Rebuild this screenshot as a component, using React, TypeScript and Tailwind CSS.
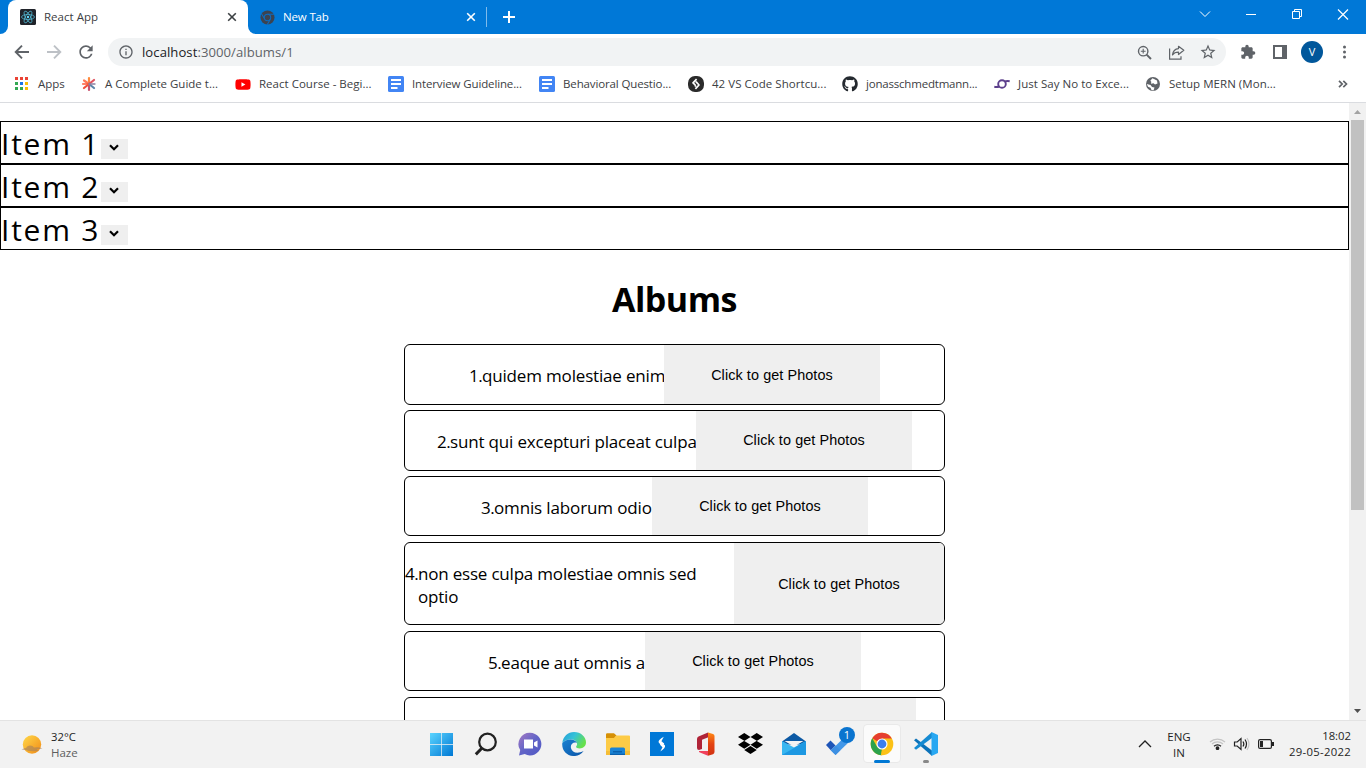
import React from "react";
import { FaGithub, FaYoutube, FaDropbox } from "react-icons/fa";
import { MdRefresh, MdInfoOutline, MdExtension, MdStarBorder } from "react-icons/md";

const albums = [
  { n: 1, title: "quidem molestiae enim", box: "h-[61px]", text: "w-[195px]", track: "tracking-[-0.17px]", btn: "w-[216px] pt-[2px]" },
  { n: 2, title: "sunt qui excepturi placeat culpa", box: "h-[61px] mt-[5px]", text: "w-[259px]", track: "tracking-[-0.17px]", btn: "w-[216px] pt-px" },
  { n: 3, title: "omnis laborum odio", box: "h-[60px] mt-[5px]", text: "w-[171px]", track: "tracking-[-0.14px]", btn: "w-[216px] pt-px" },
  { n: 4, title: "non esse culpa molestiae omnis sed optio", box: "h-[83px] mt-[6px]", text: "w-[329px] pr-[30px]", track: "tracking-[-0.2px]", btn: "w-[210px] pt-[2px] rounded-r-[5px]" },
  { n: 5, title: "eaque aut omnis a", box: "h-[60px] mt-[6px]", text: "w-[157px]", track: "tracking-[-0.16px]", btn: "w-[216px] pt-px" },
  { n: 6, title: "", box: "h-[61px] mt-[6px]", text: "w-[266px]", track: "", btn: "w-[216px]" },
];

function ReactIcon() {
  return (
    <svg className="h-4 w-4 shrink-0" viewBox="0 0 16 16">
      <rect width="16" height="16" rx="1.5" fill="#20232a" />
      <g fill="none" stroke="#53b9d4" strokeWidth=".75">
        <ellipse cx="8" cy="8" rx="6.5" ry="2.5" />
        <ellipse cx="8" cy="8" rx="6.5" ry="2.5" transform="rotate(60 8 8)" />
        <ellipse cx="8" cy="8" rx="6.5" ry="2.5" transform="rotate(120 8 8)" />
      </g>
      <circle cx="8" cy="8" r="1.2" fill="#61dafb" />
    </svg>
  );
}

function ChromeGrey() {
  return (
    <svg className="h-[15px] w-[15px] shrink-0" viewBox="0 0 16 16">
      <circle cx="8" cy="8" r="7.5" fill="#3c4350" />
      <circle cx="8" cy="8" r="3.4" fill="#3c4350" stroke="#0c6cc0" strokeWidth="1.1" />
      <path d="M8 4.6h7M5 9.7 1.6 4M11 9.8l-3.4 6" stroke="#0c6cc0" strokeWidth="1.1" />
    </svg>
  );
}

function Cross({ cls }: { cls: string }) {
  return (
    <svg className={cls} viewBox="0 0 10 10" fill="none" stroke="currentColor" strokeWidth="1.6">
      <path d="M1.2 1.2l7.6 7.6M8.8 1.2 1.2 8.8" />
    </svg>
  );
}

function TabStrip() {
  return (
    <div className="flex h-[34px] shrink-0 bg-[#0078d7] text-[11.5px] text-white">
      <div className="flex w-2 items-end bg-white"><div className="h-full w-full rounded-br-lg bg-[#0078d7]" /></div>
      <div className="w-[240px] bg-[#0078d7]">
        <div className="flex h-full items-center rounded-t-lg bg-white pl-3 pr-[11px] text-[#3c4043]">
          <ReactIcon />
          <span className="ml-2 grow tracking-[0.02px]">React App</span>
          <Cross cls="h-[10px] w-[10px]" />
        </div>
      </div>
      <div className="flex w-[238px] bg-white">
        <div className="flex w-full items-center rounded-bl-lg bg-[#0078d7] pl-[12px] pr-[10px]">
          <ChromeGrey />
          <span className="ml-[8px] grow tracking-[-0.15px]">New Tab</span>
          <Cross cls="h-[10px] w-[10px]" />
        </div>
      </div>
      <div className="my-[7px] w-px shrink-0 bg-[#7fbbeb]" />
      <div className="flex grow items-center bg-[#0078d7] pl-[16px]">
        <svg className="h-3 w-3" viewBox="0 0 12 12"><path d="M6 0v12M0 6h12" stroke="white" strokeWidth="2" /></svg>
      </div>
      <svg className="h-[34px] w-[184px] shrink-0" viewBox="1182 0 184 34" fill="none" stroke="white" strokeWidth="1">
        <path d="M1200 11.5l5 5 5-5" />
        <path d="M1246 14.5h10" />
        <path d="M1292.5 11.500h7v7h-7zM1294.500 11.500v-2h7v7h-2" />
        <path d="M1338 9.500l10 10M1348 9.500l-10 10" strokeWidth="1.2" />
      </svg>
    </div>
  );
}

function Toolbar() {
  return (
    <div className="flex h-[36px] shrink-0 items-center bg-white text-[#5f6368]">
      <svg className="ml-[14px] h-4 w-4" viewBox="0 0 16 16" fill="none" stroke="#5f6368" strokeWidth="1.9"><path d="M15 8H2M8 1.600 1.700 8 8 14.400" /></svg>
      <svg className="ml-4 h-4 w-4" viewBox="0 0 16 16" fill="none" stroke="#bdc1c6" strokeWidth="1.9"><path d="M1 8h13M8 1.600 14.300 8 8 14.400" /></svg>
      <MdRefresh className="ml-[14px] h-5 w-5" />
      <div className="ml-[12px] flex h-7 w-[1118px] items-center rounded-full bg-[#f1f3f4] pl-[10px] pr-[9px]">
        <MdInfoOutline className="h-4 w-4" />
        <span className="ml-2 grow pt-px text-[13.1px] tracking-[0.06px]"><span className="text-[#202124]">localhost</span>:3000/albums/1</span>
        <svg className="h-[15px] w-[15px]" viewBox="0 0 15 15" fill="none" stroke="#5f6368" strokeWidth="1.400"><circle cx="6.200" cy="6.200" r="4.700" /><path d="M9.600 9.600 14 14" strokeWidth="1.900" /><path d="M6.200 3.800v4.800M3.800 6.200h4.800" strokeWidth="1.100" /></svg>
        <svg className="ml-[16px] h-[17px] w-[17px]" viewBox="0 0 17 17" fill="none" stroke="#5f6368" strokeWidth="1.2">
          <path d="M1.600 4.500v10.700h11.400v-3" /><path d="M10.500 2.300 15.800 6.300l-5.300 4.200V8.200c-3 0-4.700.8-6 2.700.4-3.400 2.400-6 6-6.300z" strokeLinejoin="round" />
        </svg>
        <MdStarBorder className="ml-[14px] h-[18px] w-[18px]" />
      </div>
      <MdExtension className="ml-[14px] h-4 w-4" />
      <svg className="ml-[17px] h-[14px] w-[14px]" viewBox="0 0 14 14"><path d="M0 0h14v14H0zM2 2v10h7V2z" fillRule="evenodd" fill="#5f6368" /></svg>
      <div className="ml-[14px] flex h-[22px] w-[22px] items-center justify-center rounded-full bg-[#01579b] text-[11px] text-white">V</div>
      <svg className="ml-[17px] h-4 w-4" viewBox="0 0 16 16" fill="#5f6368"><circle cx="4.500" cy="3" r="1.500" /><circle cx="4.500" cy="8" r="1.500" /><circle cx="4.500" cy="13" r="1.500" /></svg>
    </div>
  );
}

function DocIcon() {
  return <svg className="h-4 w-4" viewBox="0 0 16 16"><rect width="16" height="16" rx="1.5" fill="#4285f4" /><path d="M3 4h10M3 8h10M3 12h6.500" stroke="white" strokeWidth="1.8" /></svg>;
}

const bookmarks: { label: string; w: string; track: string; icon: React.ReactNode }[] = [
  {
    label: "Apps", w: "w-[67px]", track: "tracking-[0px]",
    icon: <svg className="h-4 w-4" viewBox="0 0 16 16">
      <path d="M1 1h3v3H1zM6 1h3v3H6zM11 1h3v3h-3z" fill="#ea4335" />
      <path d="M1 6h3v3H1zM1 11h3v3H1zM6 11h3v3H6z" fill="#34a853" />
      <path d="M6 6h3v3H6z" fill="#1a73e8" /><path d="M11 6h3v3h-3zM11 11h3v3h-3z" fill="#fbbc04" />
    </svg>,
  },
  {
    label: "A Complete Guide t...", w: "w-[154px]", track: "tracking-[0px]",
    icon: <svg className="h-4 w-4" viewBox="0 0 16 16" strokeWidth="2.2" strokeLinecap="round">
      <path d="M8 8V2" stroke="#ff8a3c" /><path d="M8 8v6" stroke="#c9536d" /><path d="M8 8 3 4.500" stroke="#ff7a59" /><path d="M8 8 3 12" stroke="#f0503c" /><path d="M8 8l5-4" stroke="#e0525e" /><path d="M8 8l5 4" stroke="#5d84a8" /><path d="M8 8H1.600" stroke="#ff5a36" strokeWidth="1.300" /><path d="M8 8h6" stroke="#8d7fa0" strokeWidth="1.300" />
    </svg>,
  },
  { label: "React Course - Begi...", w: "w-[153px]", track: "tracking-[0.02px]", icon: <FaYoutube className="h-[17px] w-[17px] text-[#f00]" /> },
  { label: "Interview Guideline...", w: "w-[151px]", track: "tracking-[-0.13px]", icon: <DocIcon /> },
  { label: "Behavioral Questio...", w: "w-[149px]", track: "tracking-[-0.13px]", icon: <DocIcon /> },
  {
    label: "42 VS Code Shortcu...", w: "w-[154px]", track: "tracking-[0.04px]",
    icon: <svg className="h-4 w-4" viewBox="0 0 16 16"><rect width="16" height="16" rx="7" fill="#2b2b2b" /><path d="M8.600 3.200 5 6.800l2.400 2.300M8.600 6.200 11 9l-3.600 3.800M7.800 5.500 9 6.800M6.800 10.500 8 9.300" fill="none" stroke="white" strokeWidth="1.700" strokeLinejoin="round" /></svg>,
  },
  { label: "jonasschmedtmann...", w: "w-[152px]", track: "tracking-[-0.2px]", icon: <FaGithub className="h-4 w-4 text-[#24292f]" /> },
  {
    label: "Just Say No to Exce...", w: "w-[151px]", track: "tracking-[0.04px]",
    icon: <svg className="h-4 w-4" viewBox="0 0 16 16" fill="none" stroke="#5c3f8c" strokeWidth="1.900"><circle cx="8" cy="8" r="3.800" /><path d="M.3 10.800Q3 11.300 5.500 10.500M15.700 5.200Q13 4.700 10.500 5.500" strokeWidth="2.100" /></svg>,
  },
  {
    label: "Setup MERN (Mon...", w: "w-[180px]", track: "tracking-[0.04px]",
    icon: <svg className="h-4 w-4" viewBox="0 0 16 16"><circle cx="8" cy="8" r="7" fill="#5f6368" /><path d="M7.500 2.300 12 4.500l.5 3-2.500 1-1.500-1.300-2.500.5.300-2-1-1zM1.800 8l3.700 1 1.500 2 2.500.5-1 3-2-.5-1-2.300-2.500-1z" fill="white" /></svg>,
  },
];

function Bookmarks() {
  return (
    <div className="flex h-[33px] shrink-0 items-center border-b border-[#dadce0] bg-white pb-[4px] pl-[14px] text-[11.5px] text-[#3c4043]">
      {bookmarks.map((b) => (
        <div key={b.label} className={"flex shrink-0 items-center whitespace-nowrap " + b.w}>
          <span className="flex w-4 shrink-0 justify-center">{b.icon}</span>
          <span className={"ml-2 " + b.track}>{b.label}</span>
        </div>
      ))}
      <svg className="ml-auto mr-[18px] h-2 w-[10px]" viewBox="0 0 10 8" fill="none" stroke="#5f6368" strokeWidth="1.700"><path d="M1 .8 4.200 4 1 7.200M5.300 .8 8.500 4 5.300 7.200" /></svg>
    </div>
  );
}

function Page() {
  return (
    <div className="flex h-[617px] shrink-0 overflow-hidden bg-white text-black">
      <div className="flex w-[1349px] shrink-0 flex-col pt-[18px]">
        {[1, 2, 3].map((i) => (
          <div key={i} className="flex h-[43px] shrink-0 border border-black">
            <span className="w-[100px] whitespace-nowrap text-[30px] leading-[43px] tracking-[1.75px]">Item {i}</span>
            <button className="mt-[17px] flex h-5 w-[27px] items-center justify-center bg-[#efefef] pb-[3px] pr-px">
              <svg className="h-[7px] w-[10px]" viewBox="0 0 10 7" fill="none" stroke="black" strokeWidth="2.200"><path d="M1 1.200l4 4 4-4" /></svg>
            </button>
          </div>
        ))}
        <h1 className="mt-[25px] h-[49px] shrink-0 text-center text-[34px] font-bold leading-[49px] tracking-[-0.5px]">Albums</h1>
        <ul className="ml-[404px] mt-[20px] w-[541px]">
          {albums.map((a) => (
            <li key={a.n} className={"flex items-stretch justify-center rounded-[6px] border border-black " + a.box}>
              <div className={"flex shrink-0 pt-[19px] text-[17px] leading-[23px] " + a.text}>
                {a.title && <span className="w-[13px] shrink-0 tracking-[-0.6px]">{a.n}.</span>}
                {a.title && <span className={a.n === 4 ? a.track : "whitespace-nowrap " + a.track}>{a.title}</span>}
              </div>
              <button className={"shrink-0 bg-[#efefef] font-['Liberation_Sans',sans-serif] text-[14.4px] tracking-[0.09px] " + a.btn}>{a.title && "Click to get Photos"}</button>
            </li>
          ))}
        </ul>
      </div>
      <div className="flex w-[17px] flex-col items-center bg-[#f1f1f1]">
        <svg className="h-[17px] w-[17px] shrink-0" viewBox="0 0 17 17"><path d="M5 11l3.500-4 3.500 4z" fill="#a3a3a3" /></svg>
        <div className="h-[390px] w-[13px] bg-[#c1c1c1]" />
        <svg className="mt-auto h-[17px] w-[17px] shrink-0" viewBox="0 0 17 17"><path d="M5 6l3.500 4L12 6z" fill="#505050" /></svg>
      </div>
    </div>
  );
}

const taskIcons: React.ReactNode[] = [
  <svg key="win" className="h-6 w-6" viewBox="0 0 24 24"><defs><linearGradient id="win" x1="0" y1="0" x2="1" y2="1"><stop stopColor="#5ad4ff" /><stop offset="1" stopColor="#0078d4" /></linearGradient></defs><path d="M0 1h11.300v11H0zM12 1h11v11H12zM0 12.700h11.300V24H0zM12 12.700h11V24H12z" fill="url(#win)" /></svg>,
  <svg key="search" className="h-6 w-6" viewBox="0 0 24 24" fill="none" stroke="#222"><circle cx="13.500" cy="10" r="8.300" strokeWidth="2.200" /><path d="M7.800 16.300 1.800 22.400" strokeWidth="3" /></svg>,
  <svg key="chat" className="h-6 w-6" viewBox="0 0 24 24"><defs><linearGradient id="chat" x1="0" y1="0" x2="1" y2="1"><stop stopColor="#a57ac3" /><stop offset=".5" stopColor="#6264c7" /><stop offset="1" stopColor="#5058c4" /></linearGradient></defs><path d="M12 .8a11.300 11.300 0 1 1-5.200 21.300L1 23.500l1.200-5.400A11.300 11.300 0 0 1 12 .8z" fill="url(#chat)" /><path d="M6 7.500h9v9H6zM16 10.500l3.500-2v7l-3.500-2z" fill="white" /></svg>,
  <svg key="edge" className="h-6 w-6" viewBox="0 0 24 24"><defs><linearGradient id="edgeA" x1="0" y1="0" x2="1" y2=".5"><stop stopColor="#259bd8" /><stop offset=".5" stopColor="#35c2d8" /><stop offset="1" stopColor="#66e04c" /></linearGradient><linearGradient id="edgeB" x1="0" y1="0" x2="1" y2="1"><stop stopColor="#1a82d2" /><stop offset="1" stopColor="#0b55a8" /></linearGradient></defs>
    <path d="M.3 11C1 4.500 6 0 12 0c7 0 12 5 12 10.300 0 4-3 6.200-6.200 6.200-2.400 0-3.700-.8-3.700-1.700 0-.7 1-1.100 1-2.800 0-2.700-2.600-4.600-6-4.600C5 7.400 1.500 9 .3 11z" fill="url(#edgeA)" /><path d="M.3 11C1.500 9 5 7.400 8.500 7.400c3.700 0 6 1.800 6.500 3.600-3-1.500-7 .7-6 5.200 1 4 6 6.200 12.600 2.800A12 12 0 0 1 11 24C4.500 23.500-.5 18 .3 11z" fill="url(#edgeB)" /></svg>,
  <svg key="files" className="h-6 w-6" viewBox="0 0 24 24"><path d="M0 2.500Q0 1.300 1.200 1.300H8l2.500 2.200L8.500 6H0z" fill="#d69006" /><path d="M0 6h8l2.200-2.500H23q1 0 1 1V23H0z" fill="#fdcb46" /><path d="M0 19h24v4H0z" fill="#f5bd36" /><path d="M4 23v-6q0-1.500 1.500-1.500h12q1.500 0 1.500 1.500v6z" fill="#1a83d4" /><path d="M7 19h9v1.500H7zM4 21.800h15V23H4z" fill="#0a60ad" /></svg>,
  <svg key="bolt" className="h-6 w-6" viewBox="0 0 24 24"><path d="M0 0h24v24H0z" fill="#0078d7" /><path d="M13.800 4.800Q8 8 8.600 10.200 10.500 12.500 12 14.800 13.500 13.500 14.200 11.600L11.400 9.200zM10.300 19.600Q15.800 16 15 13.600 13 11.500 12 9.500 10.800 11 10 12.700L12.500 15.200z" fill="white" /></svg>,
  <svg key="office" className="h-6 w-6" viewBox="0 0 24 24"><defs><linearGradient id="off" x1="0" y1="0" x2="0" y2="1"><stop stopColor="#ff8a15" /><stop offset=".5" stopColor="#e34313" /><stop offset="1" stopColor="#d13212" /></linearGradient></defs><path d="M14 .5 4.500 4.500Q3 5.300 3 7v9q0 2 2 2l3-1V7.700L15 5z" fill="#b02438" /><path d="M14 .5l5 1.600Q20.500 2.700 20.500 4v16q0 1.600-1.500 2.200L14 23.700z" fill="url(#off)" /><path d="M5 19h9v4.700L6 20.500q-1.500-.5-1-1.500z" fill="#f0415c" /></svg>,
  <FaDropbox key="drop" className="h-[25px] w-[25px] text-black" />,
  <svg key="mail" className="h-6 w-6" viewBox="0 0 24 24"><path d="M0 9.500 12 1 24 9.500v3H0z" fill="#0c59a4" /><path d="M0 9 12 15.500 24 9v14H0z" fill="#38b6f0" /><path d="M2.500 9h19L12 14.500z" fill="#f3f3f3" /><path d="M0 23 24 9v14z" fill="#1d98e2" /></svg>,
  <svg key="todo" className="h-6 w-6" viewBox="0 0 24 24"><path d="M5 18.500 18.500 5l5 4.500L9.500 23z" fill="#4297e8" /><path d="M0 13l4.500-4.600 5 5-4.700 4.800z" fill="#1e55b8" /><path d="M9.500 13.400l-4.800 4.900 4.900 4.800 4.700-4.900z" fill="#3d8fe2" /></svg>,
  <svg key="chrome" className="h-6 w-6" viewBox="0 0 24 24"><circle cx="12" cy="12" r="11.300" fill="#fbc116" /><path d="M12 12 2.200 6.300A11.300 11.300 0 0 1 21.800 6.500H12z" fill="#e53e30" /><path d="M2.200 6.300 7.200 15l4.800 2.500L11.300 23.300A11.300 11.300 0 0 1 2.200 6.300z" fill="#2ba24c" /><path d="M12 17.500l4.800-2.700-5 8.500-.9-.1z" fill="#fbc116" /><circle cx="12" cy="12" r="5.500" fill="white" /><circle cx="12" cy="12" r="4.400" fill="#3b7ded" /></svg>,
  <svg key="code" className="h-6 w-6" viewBox="0 0 24 24"><path d="M0 8.200 2 6.500 18 18.500V24z" fill="#0b72b9" /><path d="M0 16 2 17.700 18 6V0z" fill="#168bd2" /><path d="M17.500 0 24 3v18l-6.500 3z" fill="#29a8f2" /></svg>,
];

function Taskbar() {
  return (
    <div className="flex h-[48px] shrink-0 items-stretch border-t border-[#e3e3e3] bg-[#f2f2f2] text-[11.3px] text-[#1f1f1f]">
      <div className="flex w-[420px] items-center pl-[21px]">
        <svg className="h-[22px] w-[22px]" viewBox="0 0 22 22"><defs><linearGradient id="sun" x1="0" y1="0" x2="1" y2="1"><stop stopColor="#ffd94a" /><stop offset="1" stopColor="#f28b16" /></linearGradient></defs><circle cx="11" cy="10.500" r="9.200" fill="url(#sun)" /><path d="M.5 15.500q2-1.500 4.500-1.500 1-2.500 4-2.500t4 2q4-1 8.500 1-4 .5-6 1 2 .5 2 1.200-7 1.500-13-.7z" fill="#a9835a" opacity=".65" /></svg>
        <div className="ml-[8px] leading-4"><div>32°C</div><div className="text-[11.500px] text-[#5e5e5e]">Haze</div></div>
      </div>
      {taskIcons.map((icon, i) => (
        <div key={i} className="relative flex w-[44px] shrink-0 items-center justify-center pb-[2px]">
          <div className={i === 10 ? "flex h-[39px] w-[38px] items-center justify-center rounded-[4px] border border-[#e9e9e9] bg-[#fbfbfb]" : "flex"}>{icon}</div>
          {i === 9 && <div className="absolute left-[23px] top-[6px] flex h-4 w-4 items-center justify-center rounded-full bg-[#0a74cf] text-[11px] text-white">1</div>}
          {i === 10 && <div className="absolute bottom-[5px] left-[14px] h-[3px] w-4 rounded-full bg-[#0078d4]" />}
          {i === 11 && <div className="absolute bottom-[5px] left-[19px] h-[3px] w-[6px] rounded-full bg-[#888]" />}
        </div>
      ))}
      <div className="flex grow items-center justify-end pb-px pr-[15px]">
        <svg className="h-[8px] w-[14px]" viewBox="0 0 14 8" fill="none" stroke="#222" strokeWidth="1.300"><path d="M1 7l6-6 6 6" /></svg>
        <div className="ml-[14px] w-[26px] whitespace-nowrap pt-px text-center text-[11.5px] leading-4">ENG<br />IN</div>
        <svg className="ml-[17px] h-4 w-[66px]" viewBox="0 0 66 16" fill="none" stroke="#222" strokeWidth="1.200">
          <path d="M1 6a11 11 0 0 1 15 0M3 8a8 8 0 0 1 11 0" stroke="#c4c4c4" /><path d="M5 10.300a5 5 0 0 1 7 0" /><circle cx="8.500" cy="12.200" r="1.300" fill="#222" />
          <path d="M25.500 6h2.700L32 2.600v10.800L28.200 10h-2.700z" /><path d="M34 5.500q1.700 2.500 0 5M36 3.500q3 4.500 0 9" /><path d="M38 2q4 6 0 12" stroke="#c4c4c4" />
          <rect x="49.600" y="3.600" width="12.800" height="8.800" rx="1.500" /><path d="M51 5h3v6h-3z" fill="#222" stroke="none" /><path d="M64 6v4" strokeWidth="2" />
        </svg>
        <div className="ml-[9px] w-[67px] text-right leading-4">18:02<br /><span className="-ml-2 whitespace-nowrap tracking-[0.3px]">29-05-2022</span></div>
      </div>
    </div>
  );
}

export default function App() {
  return (
    <div className="flex h-[768px] w-[1366px] flex-col overflow-hidden bg-white font-['Open_Sans','Noto_Sans',sans-serif]">
      <TabStrip />
      <Toolbar />
      <Bookmarks />
      <Page />
      <Taskbar />
    </div>
  );
}
